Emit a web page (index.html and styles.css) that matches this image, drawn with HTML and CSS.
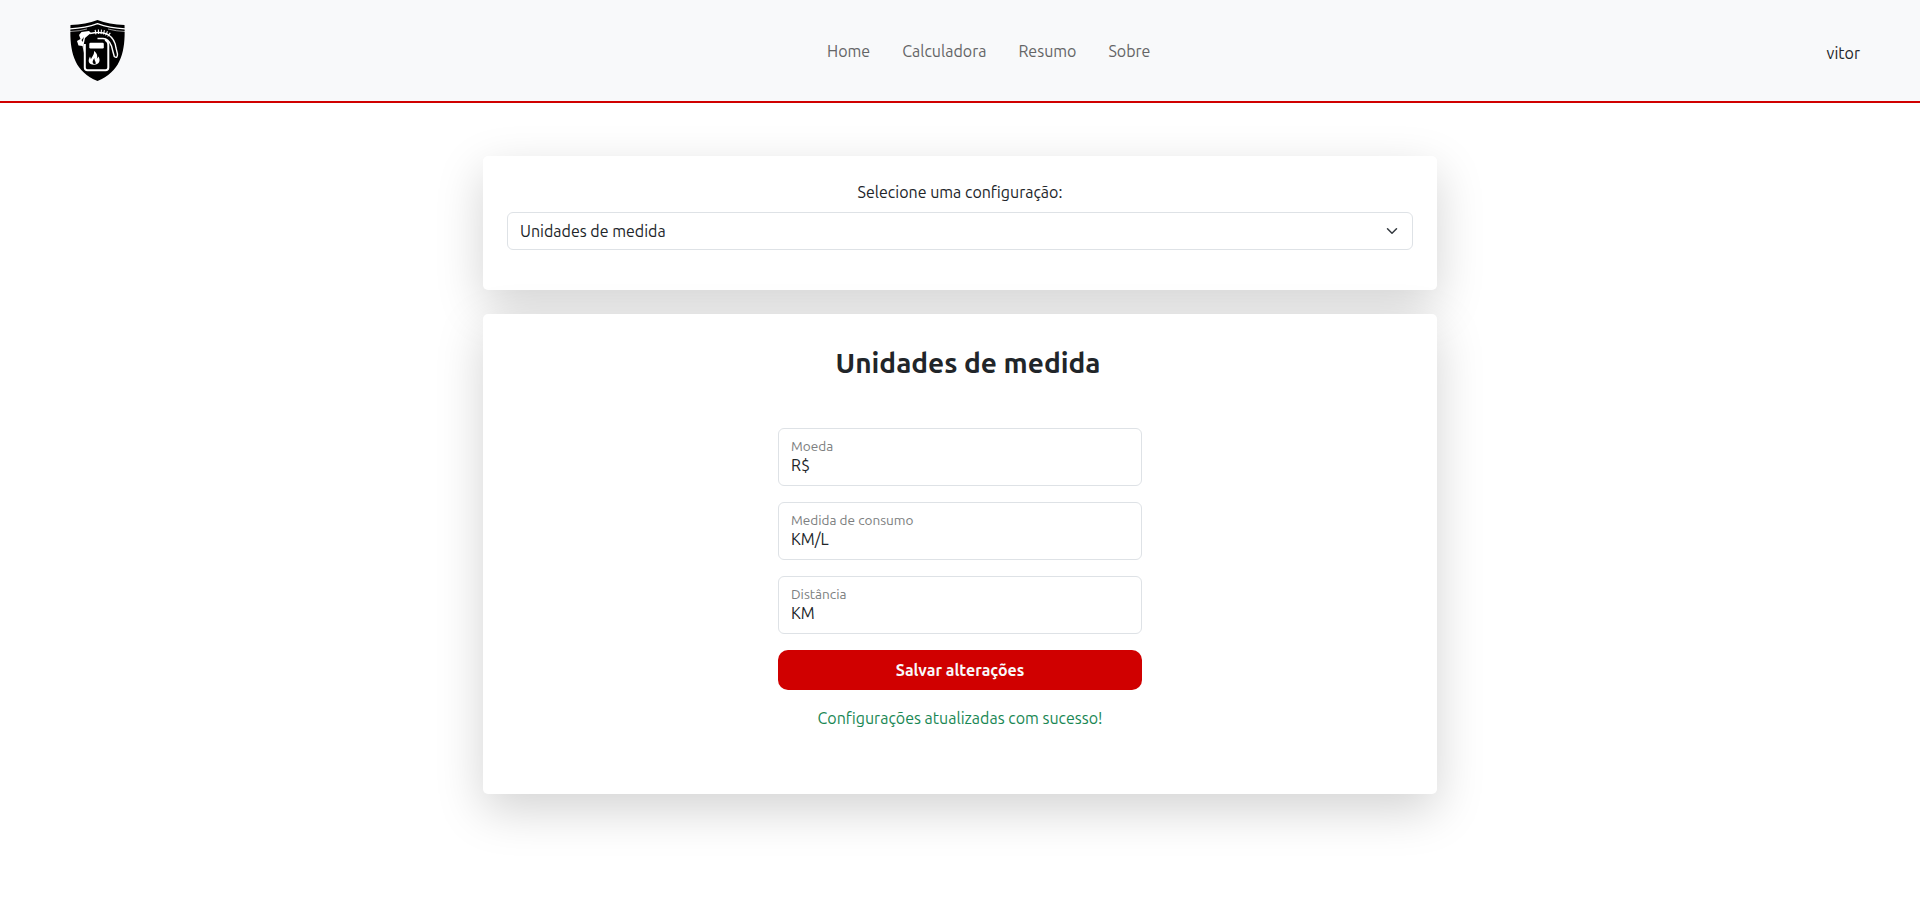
FILE: index.html
```html
<!DOCTYPE html>
<html lang="pt-BR">
<head>
<meta charset="utf-8">
<title>Configurações</title>
<link rel="stylesheet" href="styles.css">
</head>
<body>
<header class="navbar">
  <a class="brand" href="#" aria-label="Home">
    <svg class="logo" viewBox="0 0 55 62">
      <path fill="#000" d="M27.500 0Q39 4.500 54.500 5C55.500 30 52 51 27.500 61C3 51-.5 30 .5 5Q16 4.500 27.500 0Z"/>
      <path fill="none" stroke="#fff" stroke-width="1.200" d="M0 8.800Q16 8 27.500 3.600Q39 8 55 8.800"/>
      <path fill="none" stroke="#fff" stroke-width=".6" d="M0 11.500Q10 11.200 17 9M38 9Q46 11.200 55 11.500"/>
      <path fill="none" stroke="#fff" stroke-width="2" d="M14.800 24V47.500Q14.800 50.300 17.500 50.300H35.500Q38.300 50.300 38.300 47.500V25Q38.300 21 35 20"/>
      <rect x="19.300" y="22.800" width="14.500" height="5.700" rx="1.200" fill="#fff"/>
      <path fill="#fff" d="M11.500 12L19 11L21 13L18.500 15L15 18L13.800 24V33L12.500 26L8.500 25.500L7 21L10.500 19L9 15Z"/>
      <path fill="#000" d="M11.500 20L14 17L12.500 22Z"/>
      <path fill="none" stroke="#fff" stroke-width="1.400" d="M20 13.500Q31 11 38 14.500Q45 19 46 28L47.500 34Q47.500 39 44.300 36.500Q43 32 41.500 26Q38.500 18.500 33 18.500H27.500"/>
      <path fill="none" stroke="#fff" stroke-width="4.500" stroke-dasharray="1 1.800" d="M25 12.200Q34 10.500 40 15.500"/>
      <path fill="#fff" d="M24 31C28 34 27.500 37 26.700 39L28.500 36.500C31 41 29 44.500 24 44.800C18.500 44.500 17.500 41 20 36.500L21 39.500C21.500 37 24.500 35 24 31Z"/>
      <path fill="#000" d="M24 44C21.500 42.500 23 40 24.500 38C24 41 26.500 41.500 25.500 44Z"/>
    </svg>
  </a>
  <nav class="nav-links">
    <a href="#">Home</a>
    <a href="#">Calculadora</a>
    <a href="#">Resumo</a>
    <a href="#">Sobre</a>
  </nav>
  <a class="user" href="#">vitor</a>
</header>
<main class="content">
  <section class="card picker">
    <label class="picker-label">Selecione uma configuração:</label>
    <div class="select">
      <span>Unidades de medida</span>
      <svg class="chevron" viewBox="0 0 16 16"><path d="m2 5 6 6 6-6"/></svg>
    </div>
  </section>
  <section class="card units">
    <h2>Unidades de medida</h2>
    <form class="form">
      <div class="field"><label>Moeda</label><span class="value">R$</span></div>
      <div class="field"><label>Medida de consumo</label><span class="value">KM/L</span></div>
      <div class="field"><label>Distância</label><span class="value">KM</span></div>
      <button class="save" type="button">Salvar alterações</button>
      <p class="success">Configurações atualizadas com sucesso!</p>
    </form>
  </section>
</main>
</body>
</html>
```
FILE: styles.css
```css
* { box-sizing: border-box; }
body {
  margin: 0;
  min-height: 910px;
  background: #fff;
  color: #212529;
  font-family: Ubuntu, "Noto Sans", sans-serif;
  font-size: 16px;
  font-weight: 400;
  line-height: 24px;
}
a { color: inherit; text-decoration: none; }
.navbar {
  display: grid;
  grid-template-columns: 757px 1fr auto;
  align-items: center;
  height: 103px;
  padding: 0 60px 0 70px;
  border-bottom: 2px solid #d00000;
  background: #f8f9fa;
}
.brand { display: flex; }
.logo { width: 55px; height: 62px; }
.nav-links { display: flex; gap: 32px; color: #646566; }
.user { padding-top: 4px; }
.content {
  display: flex;
  flex-direction: column;
  gap: 24px;
  width: 954px;
  margin: 53px auto 0;
}
.card {
  border-radius: 5px;
  background: #fff;
  box-shadow: 0 16px 48px rgba(0, 0, 0, .175);
}
.picker { height: 134px; padding: 24px; }
.picker-label { display: block; margin-bottom: 8px; text-align: center; }
.select {
  display: flex;
  align-items: center;
  justify-content: space-between;
  height: 38px;
  padding: 0 12px;
  border: 1px solid #dee2e6;
  border-radius: 6px;
  background: #fff;
}
.chevron { width: 16px; height: 12px; fill: none; stroke: #343a40; stroke-width: 2; stroke-linecap: round; stroke-linejoin: round; }
.units { height: 480px; padding-top: 32px; }
h2 { margin: 0 0 48px; padding-left: 16px; font-size: 28px; line-height: 34px; font-weight: 600; text-align: center; }
.form { display: flex; flex-direction: column; gap: 16px; width: 364px; margin: 0 auto; }
.field {
  display: flex;
  flex-direction: column;
  height: 58px;
  padding: 7px 12px;
  border: 1px solid #dee2e6;
  border-radius: 6px;
  background: #fff;
}
.field label { color: #7c7e80; font-size: 13.6px; line-height: 20px; }
.value { line-height: 18px; }
.save {
  height: 40px;
  padding: 0;
  border: 0;
  border-radius: 10px;
  background: #d00000;
  color: #f8f9fa;
  font: 600 16px/24px Ubuntu, "Noto Sans", sans-serif;
}
.success { margin: 0; color: #198754; text-align: center; }
```
